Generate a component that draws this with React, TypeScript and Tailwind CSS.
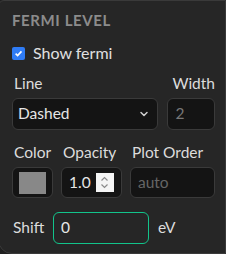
import { ChevronDown } from 'lucide-react';

export default function App() {
  return (
    <div className="w-[226px] h-[254px] bg-[#202020] overflow-hidden" style={{ fontFamily: 'Lato, "Noto Sans", sans-serif' }}>
      <div className="w-[228px] h-[254px] -ml-[2px] bg-[#262626] border border-[#3a3a3a] rounded-bl-[14px] rounded-tl-[6px] pl-[13px] pr-[10px] pt-[10px]">
        <div className="text-[15px] font-bold tracking-[0.6px] text-[#8c8c8c] leading-[18px]">FERMI LEVEL</div>

        <label className="mt-[14px] flex items-center gap-[8px] text-[16px] text-[#e0e0e0] leading-[20px]">
          <span className="w-[13px] h-[13px] rounded-[2px] bg-[#2f7cf6] flex items-center justify-center">
            <svg width="9" height="9" viewBox="0 0 10 10">
              <path d="M1.8 5.2 L4 7.3 L8.3 2.6" fill="none" stroke="white" strokeWidth="1.8" />
            </svg>
          </span>
          Show fermi
        </label>

        <div className="mt-[10px] flex gap-[9px]">
          <div className="w-[148px]">
            <div className="text-[15.5px] text-[#dcdcdc] leading-[20px] pl-[2px]">Line</div>
            <div className="mt-[5px] h-[32px] rounded-[6px] bg-[#141414] border border-[#3a3a3a] flex items-center justify-between pl-[5px] pr-[7px] text-[15.5px] text-[#e6e6e6]">
              Dashed
              <ChevronDown size={12} strokeWidth={3} className="text-[#cfcfcf]" />
            </div>
          </div>
          <div className="w-[48px]">
            <div className="text-[15.5px] text-[#dcdcdc] leading-[20px] text-right">Width</div>
            <div className="mt-[5px] h-[32px] rounded-[6px] bg-[#141414] border border-[#3a3a3a] flex items-center pl-[7px] text-[15.5px] text-[#777]">2</div>
          </div>
        </div>

        <div className="mt-[12px] flex gap-[8px]">
          <div className="w-[41px]">
            <div className="text-[15.5px] text-[#dcdcdc] leading-[20px] pl-[2px]">Color</div>
            <div className="mt-[5px] h-[31px] rounded-[6px] bg-[#141414] border border-[#3a3a3a] flex items-center justify-center">
              <div className="w-[27px] h-[22px] bg-[#888888]" />
            </div>
          </div>
          <div className="w-[61px]">
            <div className="text-[15.5px] text-[#dcdcdc] leading-[20px] pl-[2px]">Opacity</div>
            <div className="mt-[5px] h-[31px] rounded-[6px] bg-[#141414] border border-[#3a3a3a] flex items-center pl-[7px] gap-[5px] text-[15.5px] text-[#e6e6e6]">
              1.0
              <span className="w-[18px] h-[19px] bg-[#f4f4f4] flex items-center justify-center">
                <svg width="9" height="13" viewBox="0 0 9 13">
                  <path d="M1.5 4.5 L4.5 1.5 L7.5 4.5 M1.5 8.5 L4.5 11.5 L7.5 8.5" fill="none" stroke="#8a8a8a" strokeWidth="1.2" />
                </svg>
              </span>
            </div>
          </div>
          <div className="flex-1">
            <div className="text-[15.5px] text-[#dcdcdc] leading-[20px] pl-[2px]">Plot Order</div>
            <div className="mt-[5px] h-[31px] rounded-[6px] bg-[#141414] border border-[#3a3a3a] flex items-center pl-[7px] text-[15.5px] text-[#666]">auto</div>
          </div>
        </div>

        <div className="mt-[14px] flex items-center">
          <div className="text-[15.5px] text-[#dcdcdc] w-[41px] pl-[1px]">Shift</div>
          <div className="w-[96px] h-[32px] rounded-[6px] border border-[#12c48b] flex items-center pl-[7px] text-[15.5px] text-[#e6e6e6]">0</div>
          <div className="ml-[9px] text-[15.5px] text-[#dcdcdc]">eV</div>
        </div>
      </div>
    </div>
  );
}
